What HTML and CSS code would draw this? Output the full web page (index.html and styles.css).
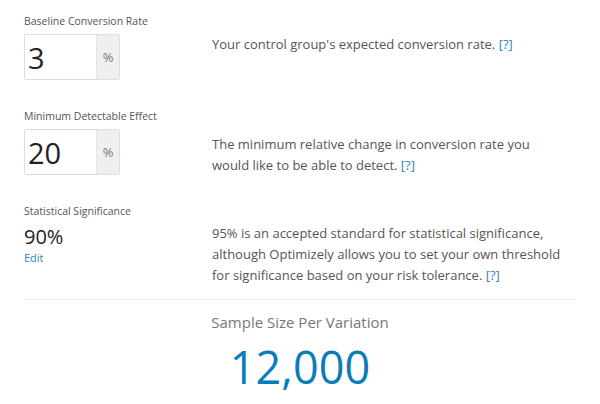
FILE: index.html
```html
<!DOCTYPE html>
<html>
<head>
	<title>Sample Size Calculator</title>
	<link rel="stylesheet" href="styles.css">
</head>
<body>
	<div class="calc">
		<div class="row">
			<div class="left">
				<div class="label">Baseline Conversion Rate</div>
				<div class="field">
					<input type="text" class="numInput" value="3">
					<span class="addon">%</span>
				</div>
			</div>
			<p class="help helpOne">Your control group's expected conversion rate. <a href="#">[?]</a></p>
		</div>
		<div class="row">
			<div class="left">
				<div class="label">Minimum Detectable Effect</div>
				<div class="field">
					<input type="text" class="numInput" value="20">
					<span class="addon">%</span>
				</div>
			</div>
			<p class="help helpTwo">The minimum relative change in conversion rate you would like to be able to detect. <a href="#">[?]</a></p>
		</div>
		<div class="row rowLast">
			<div class="left">
				<div class="label">Statistical Significance</div>
				<div class="sig">90%</div>
				<a href="#" class="edit">Edit</a>
			</div>
			<p class="help helpThree">95% is an accepted standard for statistical significance, although Optimizely allows you to set your own threshold for significance based on your risk tolerance. <a href="#">[?]</a></p>
		</div>
		<div class="result">
			<div class="resultTitle">Sample Size Per Variation</div>
			<div class="resultValue">12,000</div>
		</div>
	</div>
</body>
</html>
```

FILE: styles.css
```css
body{
	margin:0;
	font-family:"Open Sans", "Lato", sans-serif;
	color:#555;
	background:#fff;
}
.calc{
	padding:13px 24px 0 24px;
}
.row{
	display:grid;
	grid-template-columns:188px 1fr;
	height:95px;
}
.rowLast{
	height:96px;
	border-bottom:1px solid #f0f0f0;
}
.label{
	font-size:10.5px;
	line-height:16px;
	color:#555;
	margin-bottom:5px;
}
.field{
	display:flex;
	width:96px;
	height:46px;
	box-sizing:border-box;
	border:1px solid #ddd;
	border-radius:2px;
}
.numInput{
	width:71px;
	box-sizing:border-box;
	border:none;
	padding:0 3px;
	font-family:inherit;
	font-size:29px;
	color:#222;
	outline:none;
	background:#fff;
}
.addon{
	flex:1;
	display:flex;
	align-items:center;
	justify-content:center;
	background:#efefef;
	border-left:1px solid #e4e4e4;
	font-size:13px;
	color:#777;
}
.sig{
	font-size:20px;
	line-height:26px;
	color:#222;
	margin-top:4px;
}
.edit{
	display:block;
	font-size:11px;
	line-height:16px;
	color:#2f86c1;
	text-decoration:none;
}
.help{
	margin:0;
	max-width:352px;
	font-size:13px;
	line-height:21px;
	color:#555;
}
.help a{
	color:#2f86c1;
	text-decoration:none;
}
.helpOne{
	padding-top:21px;
}
.helpTwo{
	padding-top:26px;
}
.helpThree{
	padding-top:20px;
}
.result{
	text-align:center;
	padding-top:12px;
}
.resultTitle{
	font-size:15px;
	line-height:20px;
	color:#777;
}
.resultValue{
	font-size:45px;
	line-height:56px;
	color:#0b7cba;
	margin-top:7px;
}
```
